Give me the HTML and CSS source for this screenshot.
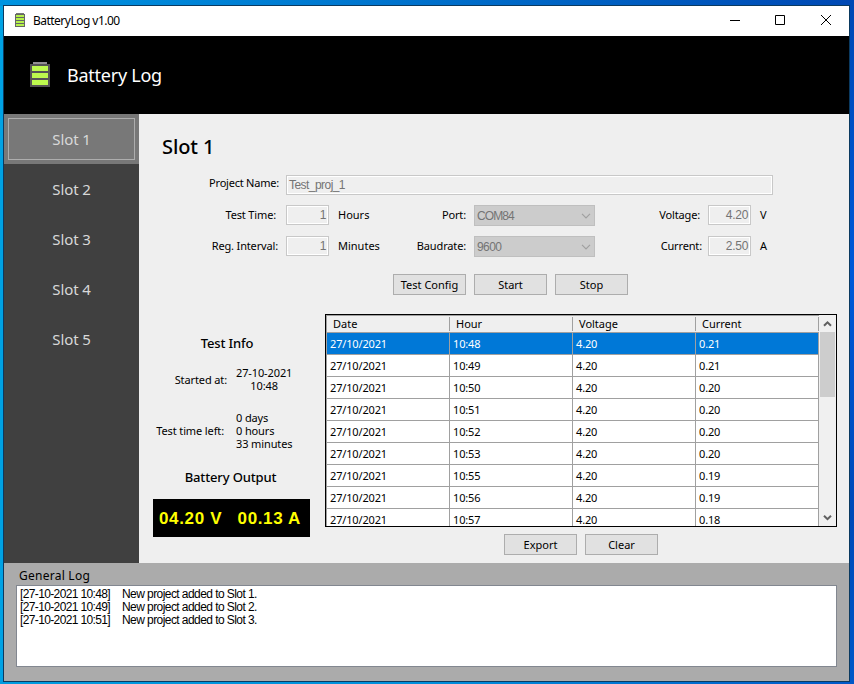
FILE: index.html
```html
<!DOCTYPE html>
<html lang="en">
<head>
<meta charset="utf-8">
<title>BatteryLog v1.00</title>
<link rel="stylesheet" href="styles.css">
</head>
<body>
<div class="window">
  <div class="titlebar">
    <svg class="app-icon" width="12" height="14" viewBox="0 0 12 14" shape-rendering="crispEdges"><path fill="#777" d="M2 0h8v1H2z"/><path fill="#666" d="M1 1h10v13H1z"/><path fill="#b5f24b" d="M2 2h8v2H2zM2 5h8v2H2zM2 8h8v2H2zM2 11h8v2H2z"/></svg>
    <span class="caption">BatteryLog v1.00</span>
    <svg class="controls" width="102" height="12" viewBox="0 0 102 12"><path fill="none" stroke="#000" d="M0 6.500h10M45.500 1.500h9v9h-9zM91 1l10 10M101 1L91 11"/></svg>
  </div>
  <header class="header">
    <svg width="22" height="25" viewBox="0 0 22 25" shape-rendering="crispEdges"><path fill="#928e92" d="M4 0h14v2H4z"/><path fill="#555355" d="M1 2h20v23H1z"/><path fill="#bdf94e" d="M3 4h16v5H3zM3 11h16v5H3zM3 18h16v5H3z"/></svg>
    <h1>Battery Log</h1>
  </header>
  <div class="body">
    <nav class="sidebar">
      <button class="slot active">Slot 1</button>
      <button class="slot">Slot 2</button>
      <button class="slot">Slot 3</button>
      <button class="slot">Slot 4</button>
      <button class="slot">Slot 5</button>
    </nav>
    <main class="main">
      <h2>Slot 1</h2>
      <div class="form">
        <span class="label project">Project Name:</span><div class="field wide">Test_proj_1</div>
        <span class="label short">Test Time:</span><div class="field num">1</div><span class="unit">Hours</span>
        <span class="label">Port:</span><div class="combo"><span class="com">COM84</span><svg width="10" height="6" viewBox="0 0 10 6"><path d="M1 .8l4 4 4-4"/></svg></div>
        <span class="label">Voltage:</span><div class="field num">4.20</div><span class="unit">V</span>
        <span class="label">Reg. Interval:</span><div class="field num">1</div><span class="unit">Minutes</span>
        <span class="label">Baudrate:</span><div class="combo"><span>9600</span><svg width="10" height="6" viewBox="0 0 10 6"><path d="M1 .8l4 4 4-4"/></svg></div>
        <span class="label current">Current:</span><div class="field num">2.50</div><span class="unit">A</span>
      </div>
      <div class="buttons top"><button class="btn">Test Config</button><button class="btn">Start</button><button class="btn">Stop</button></div>
      <div class="results">
        <section class="info">
          <h3>Test Info</h3>
          <div class="pair started"><span>Started at:</span><div class="value center">27-10-2021<br>10:48</div></div>
          <div class="pair left"><span>Test time left:</span><div class="value">0 days<br>0 hours<br>33 minutes</div></div>
          <h3 class="output-title">Battery Output</h3>
          <div class="output"><span>04.20 V</span><span>00.13 A</span></div>
        </section>
        <section class="data">
          <div class="table">
            <div class="rows">
              <div class="row head"><span>Date</span><span>Hour</span><span>Voltage</span><span>Current</span></div>
              <div class="row selected"><span>27/10/2021</span><span>10:48</span><span>4.20</span><span>0.21</span></div>
              <div class="row"><span>27/10/2021</span><span>10:49</span><span>4.20</span><span>0.21</span></div>
              <div class="row"><span>27/10/2021</span><span>10:50</span><span>4.20</span><span>0.20</span></div>
              <div class="row"><span>27/10/2021</span><span>10:51</span><span>4.20</span><span>0.20</span></div>
              <div class="row"><span>27/10/2021</span><span>10:52</span><span>4.20</span><span>0.20</span></div>
              <div class="row"><span>27/10/2021</span><span>10:53</span><span>4.20</span><span>0.20</span></div>
              <div class="row"><span>27/10/2021</span><span>10:55</span><span>4.20</span><span>0.19</span></div>
              <div class="row"><span>27/10/2021</span><span>10:56</span><span>4.20</span><span>0.19</span></div>
              <div class="row"><span>27/10/2021</span><span>10:57</span><span>4.20</span><span>0.18</span></div>
            </div>
            <div class="scrollbar">
              <svg width="15" height="17" viewBox="0 0 15 17"><path d="M4 10.800l3.500-3.500 3.500 3.500"/></svg>
              <div class="thumb"></div>
              <svg width="15" height="17" viewBox="0 0 15 17"><path d="M4 6.700l3.500 3.500 3.500-3.500"/></svg>
            </div>
          </div>
          <div class="buttons bottom"><button class="btn">Export</button><button class="btn">Clear</button></div>
        </section>
      </div>
    </main>
  </div>
  <footer class="log">
    <h4>General Log</h4>
    <div class="entries">
      <div class="entry"><span>[27-10-2021 10:48]</span><span>New project added to Slot 1.</span></div>
      <div class="entry"><span>[27-10-2021 10:49]</span><span>New project added to Slot 2.</span></div>
      <div class="entry"><span>[27-10-2021 10:51]</span><span>New project added to Slot 3.</span></div>
    </div>
  </footer>
</div>
</body>
</html>
```
FILE: styles.css
```css
* { box-sizing: border-box; }
body {
  margin: 0; width: 854px; height: 684px; padding: 5px 4px 2px 3px; overflow: hidden;
  font: 11px/14px "Noto Sans", sans-serif; color: #000; white-space: nowrap;
  background:
    linear-gradient(90deg, #0094e0, #0078d0 40%, #0048b4) top / 100% 6px no-repeat,
    linear-gradient(90deg, #009ce0, #008fdc 50%, #0058c8) bottom / 100% 4px no-repeat,
    linear-gradient(90deg, #00a2e4 50%, transparent 50%) no-repeat,
    linear-gradient(#0048b4, #0058d8 40%, #0049b8 75%, #0058c8);
}
h1, h2, h3, h4 { margin: 0; font-weight: 400; }
svg { display: block; flex: none; }
button { font: inherit; color: inherit; padding: 0; margin: 0; }
.window { width: 847px; height: 677px; border: 1px solid #0b3a60; display: flex; flex-direction: column; }
.titlebar { height: 30px; background: #fff; display: flex; align-items: center; padding: 0 17px 0 10px; }
.app-icon { margin-top: -2px; }
.caption { margin-left: 7px; font-size: 12px; letter-spacing: -.52px; }
.controls { margin-left: auto; margin-top: -2px; }
.header { height: 78px; background: #000; color: #fff; display: flex; align-items: center; padding-left: 25px; gap: 16px; }
.header svg { margin-top: -2px; }
.header h1 { font-size: 18px; line-height: 24px; letter-spacing: -.25px; }
.body { height: 449px; display: flex; }
.sidebar { width: 135px; background: #404040; color: #d8d8d8; }
.slot { display: block; width: 135px; height: 50px; border: 0; background: none; font-size: 15px; line-height: 50px; letter-spacing: -.1px; }
.slot.active { background: #787878; outline: 1px solid #adadad; outline-offset: -5px; }
.main { width: 710px; background: #efefef; }
.main h2 { font-size: 20px; line-height: 28px; font-weight: 500; padding: 19px 0 0 23px; letter-spacing: -.1px; }
.form { margin-top: 14px; display: grid; grid-template-columns: 147px 43px 60px 85px 121px 113px 43px 98px; grid-template-rows: 30px 31px 21px; }
.label { text-align: right; padding-right: 8px; line-height: 20px; letter-spacing: -.15px; }
.label.short { padding-right: 10px; }
.label.project { line-height: 16px; padding-right: 7px; letter-spacing: -.22px; }
.label.current { padding-right: 6px; }
.unit { padding-left: 9px; line-height: 20px; }
.field, .combo { font-family: "Liberation Sans", sans-serif; font-size: 12px; color: #747474; }
.field { height: 20px; border: 1px solid #c8c8c8; box-shadow: inset 0 0 0 1px #fff; line-height: 18px; padding: 0 2px; letter-spacing: -.55px; }
.field.num { text-align: right; letter-spacing: -.3px; }
.wide { grid-column: 2 / 9; width: 487px; }
.combo { height: 21px; background: #ccc; border: 1px solid #bfbfbf; display: flex; align-items: center; justify-content: space-between; padding: 0 3px 0 2px; letter-spacing: -.55px; }
.combo .com { letter-spacing: -.9px; }
.combo path { fill: none; stroke: #a0a0a0; stroke-width: 1.2; }
.buttons { display: flex; gap: 8px; }
.btn { width: 73px; height: 21px; border: 1px solid #adadad; background: #e1e1e1; line-height: 18px; }
.buttons.top { margin: 17px 0 0 254px; }
.results { display: flex; margin-top: 19px; }
.info { width: 186px; padding: 20px 15px 0 14px; }
.info h3 { font-size: 13px; line-height: 18px; font-weight: 500; text-align: center; padding-right: 9px; letter-spacing: -.15px; }
.pair { display: flex; align-items: center; line-height: 13px; letter-spacing: -.12px; }
.pair > span { width: 74px; text-align: right; }
.pair .value { margin-left: 9px; }
.started { margin-top: 14px; }
.center { text-align: center; }
.left { margin-top: 19px; }
.left > span { width: 71px; }
.left .value { margin-left: 12px; }
.info .output-title { margin-top: 18px; padding: 0 2px 0 0; }
.output { margin-top: 13px; height: 38px; background: #000; color: #ff0; display: flex; justify-content: space-between; padding: 0 9px 0 6px; font: bold 17px/39px "Liberation Sans", sans-serif; letter-spacing: .65px; }
.table { width: 512px; height: 213px; border: 1px solid #000; display: flex; overflow: hidden; }
.rows { width: 493px; height: 211px; overflow: hidden; border: solid #a0a0a0; border-width: 1px 0 0 1px; }
.row { display: grid; grid-template-columns: repeat(4, 123px); height: 22px; line-height: 21px; background: #fff; border-bottom: 1px solid #a0a0a0; letter-spacing: -.16px; }
.row > span { padding-left: 3px; border-right: 1px solid #a0a0a0; }
.head { height: 17px; background: #efefef; line-height: 16px; letter-spacing: 0; }
.head > span { padding-left: 6px; margin: 1px 0; line-height: 14px; }
.selected { background: #0078d7; color: #fff; }
.scrollbar { width: 17px; padding: 0 1px; background: #f0f0f0; display: flex; flex-direction: column; }
.scrollbar svg:last-child { margin-top: auto; }
.scrollbar path { fill: none; stroke: #606060; stroke-width: 2; }
.thumb { height: 65px; background: #cdcdcd; }
.buttons.bottom { margin: 7px 0 0 179px; }
.log { height: 118px; background: #ababab; padding: 4px 12px 0; }
.log h4 { font-size: 12px; line-height: 18px; padding-left: 3px; letter-spacing: .25px; }
.entries { height: 82px; background: #fff; border: 1px solid #828790; padding: 2px 3px; font: 12px/13px "Liberation Sans", sans-serif; }
.entry { display: flex; letter-spacing: -.57px; }
.entry > span:first-child { width: 102px; letter-spacing: -.63px; }
```
